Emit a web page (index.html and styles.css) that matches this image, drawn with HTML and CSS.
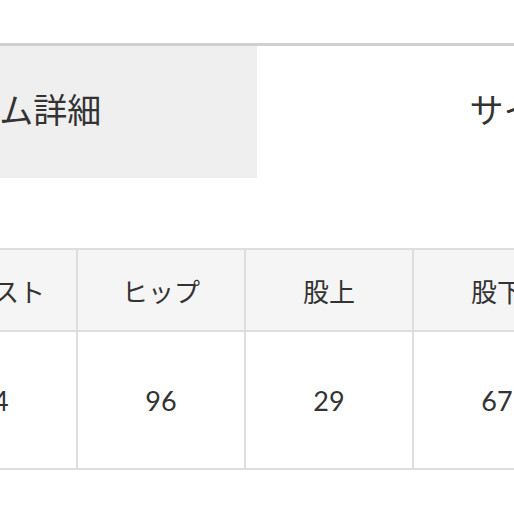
FILE: index.html
```html
<!DOCTYPE html>
<html lang="ja">
<head>
<meta charset="utf-8">
<link rel="stylesheet" href="styles.css">
</head>
<body>
<div class="page">
  <div class="tabs">
    <div class="tab active">アイテム詳細</div>
    <div class="tab">サイズ</div>
  </div>
  <table class="size-table">
    <thead>
      <tr><th>ウエスト</th><th>ヒップ</th><th>股上</th><th>股下</th></tr>
    </thead>
    <tbody>
      <tr><td>74</td><td>96</td><td>29</td><td>67</td></tr>
    </tbody>
  </table>
</div>
</body>
</html>
```

FILE: styles.css
```css
html, body {
  margin: 0;
  padding: 0;
  background: #ffffff;
  overflow: hidden;
  width: 514px;
  height: 514px;
}
body {
  font-family: "Noto Sans CJK JP", "Noto Sans", sans-serif;
  color: #333333;
}
.page {
  padding-top: 43px;
  width: 1200px;
}
.tabs {
  display: flex;
  margin-left: -255px;
  width: 1100px;
  border-top: 3px solid #d0d0d0;
}
.tab {
  flex: 0 0 auto;
  box-sizing: border-box;
  width: 512px;
  height: 132px;
  padding-bottom: 8px;
  display: flex;
  align-items: center;
  justify-content: center;
  font-size: 34px;
  color: #333333;
  background: #ffffff;
}
.tab + .tab {
  width: 526px;
}
.tab.active {
  background: #efefef;
}
.size-table {
  margin-top: 70px;
  margin-left: -92px;
  width: 664px;
  border-collapse: collapse;
  table-layout: fixed;
}
.size-table th,
.size-table td {
  width: 166px;
  border: 2px solid #dedede;
  text-align: center;
  padding: 0;
  color: #333333;
}
.size-table th {
  height: 80px;
  background: #f5f5f5;
  font-weight: normal;
  font-size: 26px;
}
.size-table td {
  height: 136px;
  background: #ffffff;
  font-size: 27px;
  font-family: "Lato", "Noto Sans CJK JP", sans-serif;
}
```
